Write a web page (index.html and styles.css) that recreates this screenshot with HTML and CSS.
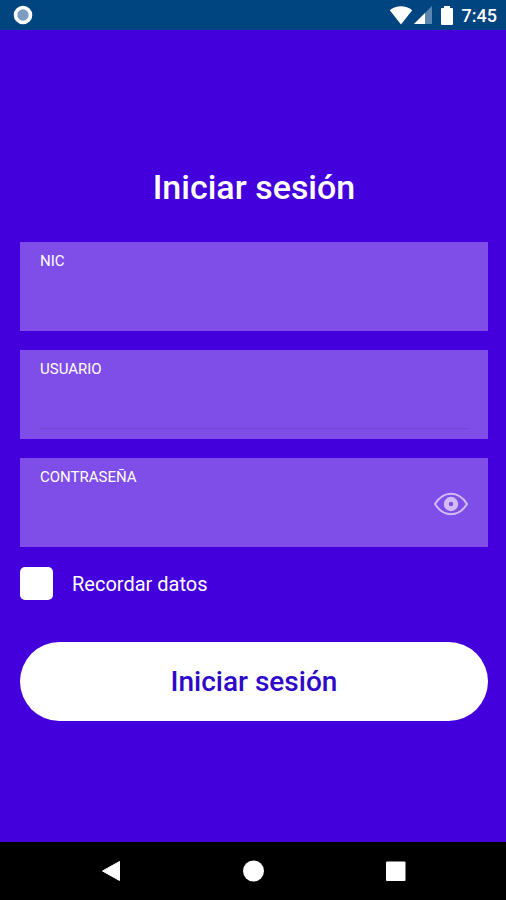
FILE: index.html
```html
<!DOCTYPE html>
<html lang="es">
<head>
  <meta charset="UTF-8">
  <meta name="viewport" content="width=device-width, initial-scale=1.0">
  <title>Iniciar sesión</title>
  <link rel="stylesheet" href="styles.css">
</head>
<body>
  <header class="status-bar">
    <svg class="notification" width="20" height="20" viewBox="0 0 20 20">
      <circle cx="10" cy="10" r="7.5" fill="#7d9cc2" stroke="#fff" stroke-width="3.6"/>
    </svg>
    <div class="status-icons">
      <svg width="24" height="20" viewBox="0 0 24 20">
        <path d="M12 19.5L0.8 5.2C7 -0.2 17 -0.2 23.2 5.2z" fill="#fff"/>
      </svg>
      <svg width="18" height="18" viewBox="0 0 18 18">
        <path d="M0 18L18 0V18z" fill="#5a87b0"/>
        <path d="M0 18L11 7V18z" fill="#fff"/>
      </svg>
      <svg class="battery" width="12" height="19" viewBox="0 0 12 19">
        <path d="M3 0h6v2H11a1 1 0 0 1 1 1v15a1 1 0 0 1-1 1H1a1 1 0 0 1-1-1V3a1 1 0 0 1 1-1h2z" fill="#fff"/>
      </svg>
      <span class="clock">7:45</span>
    </div>
  </header>

  <main class="login">
    <h1 class="title">Iniciar sesión</h1>
    <form class="login-form">
      <div class="field">
        <label for="nic">NIC</label>
        <input type="text" id="nic">
      </div>
      <div class="field">
        <label for="usuario">USUARIO</label>
        <input type="text" id="usuario" class="underlined">
      </div>
      <div class="field">
        <label for="password">CONTRASEÑA</label>
        <div class="password-row">
          <input type="password" id="password">
          <button type="button" class="toggle" id="toggle" aria-label="Mostrar contraseña">
            <svg width="34" height="24" viewBox="0 0 34 24" fill="none" stroke="#d2bcf8">
              <path d="M1 12C5 5.500 11 1.800 17 1.800S29 5.500 33 12C29 18.500 23 22.200 17 22.200S5 18.500 1 12z" stroke-width="2"/>
              <circle cx="17" cy="12" r="4.700" stroke-width="5"/>
            </svg>
          </button>
        </div>
      </div>
      <div class="remember">
        <input type="checkbox" id="recordar">
        <label for="recordar">Recordar datos</label>
      </div>
      <button type="submit" class="submit">Iniciar sesión</button>
    </form>
  </main>

  <nav class="nav-bar">
    <button type="button" aria-label="Atrás">
      <svg width="22" height="22" viewBox="0 0 22 22"><path d="M2.500 11L19.500 1.500V20.500z" fill="#fff" stroke="#fff" stroke-linejoin="round"/></svg>
    </button>
    <button type="button" aria-label="Inicio">
      <svg width="22" height="22" viewBox="0 0 22 22"><circle cx="11.500" cy="11" r="10.500" fill="#fff"/></svg>
    </button>
    <button type="button" aria-label="Recientes">
      <svg width="22" height="22" viewBox="0 0 22 22"><rect x="2" y="1.500" width="19.500" height="19.500" rx="1" fill="#fff"/></svg>
    </button>
  </nav>

  <script>
    document.getElementById('toggle').addEventListener('click', () => {
      const input = document.getElementById('password');
      input.type = input.type === 'password' ? 'text' : 'password';
    });
  </script>
</body>
</html>
```
FILE: styles.css
```css
* {
  box-sizing: border-box;
}
body {
  margin: 0;
  min-height: 100vh;
  display: flex;
  flex-direction: column;
  background: #4400dc;
  color: white;
  font-family: Roboto, sans-serif;
}
button {
  padding: 0;
  border: none;
  background: none;
  cursor: pointer;
}
svg {
  display: block;
}
.status-bar {
  height: 30px;
  padding: 0 9px 0 13px;
  display: flex;
  align-items: center;
  justify-content: space-between;
  background: #004480;
}
.status-icons {
  display: flex;
  align-items: center;
  gap: 1px;
}
.battery {
  margin: 0 8px;
}
.clock {
  font-size: 18px;
  font-weight: 500;
}
.login {
  flex: 1;
  padding: 0 18px 0 20px;
  display: flex;
  flex-direction: column;
  justify-content: center;
}
.title {
  margin: 0 0 19px;
  font-size: 34px;
  font-weight: 500;
  line-height: 72px;
  text-align: center;
}
.login-form {
  display: flex;
  flex-direction: column;
  gap: 19px;
}
.field {
  height: 89px;
  padding: 9px 20px 10px;
  display: flex;
  flex-direction: column;
  background: #7f4ee8;
}
.field label {
  font-size: 15px;
  line-height: 20px;
}
.field input {
  flex: 1;
  width: 100%;
  min-width: 0;
  padding: 0;
  border: none;
  border-bottom: 1px solid #7d4ce5;
  outline: none;
  background: transparent;
  color: white;
  font: 20px Roboto, sans-serif;
}
.field .underlined {
  border-bottom-color: #7344d2;
}
.password-row {
  flex: 1;
  display: flex;
}
.password-row input {
  border-bottom-color: transparent;
}
.toggle {
  align-self: flex-start;
  padding-top: 5px;
}
.remember {
  display: flex;
  align-items: center;
  gap: 19px;
  margin: 1px 0 23px;
}
.remember input {
  appearance: none;
  width: 33px;
  height: 33px;
  margin: 0;
  border-radius: 5px;
  background: white;
}
.remember input:checked {
  border: 9px solid white;
  background: #4400dc;
}
.remember label {
  font-size: 20px;
}
.submit {
  height: 79px;
  border-radius: 40px;
  background: white;
  color: #2e0ac8;
  font: 500 28px Roboto, sans-serif;
}
.nav-bar {
  height: 58px;
  padding: 0 40px;
  display: flex;
  align-items: center;
  background: black;
}
.nav-bar button {
  flex: 1;
  display: flex;
  justify-content: center;
}
```
